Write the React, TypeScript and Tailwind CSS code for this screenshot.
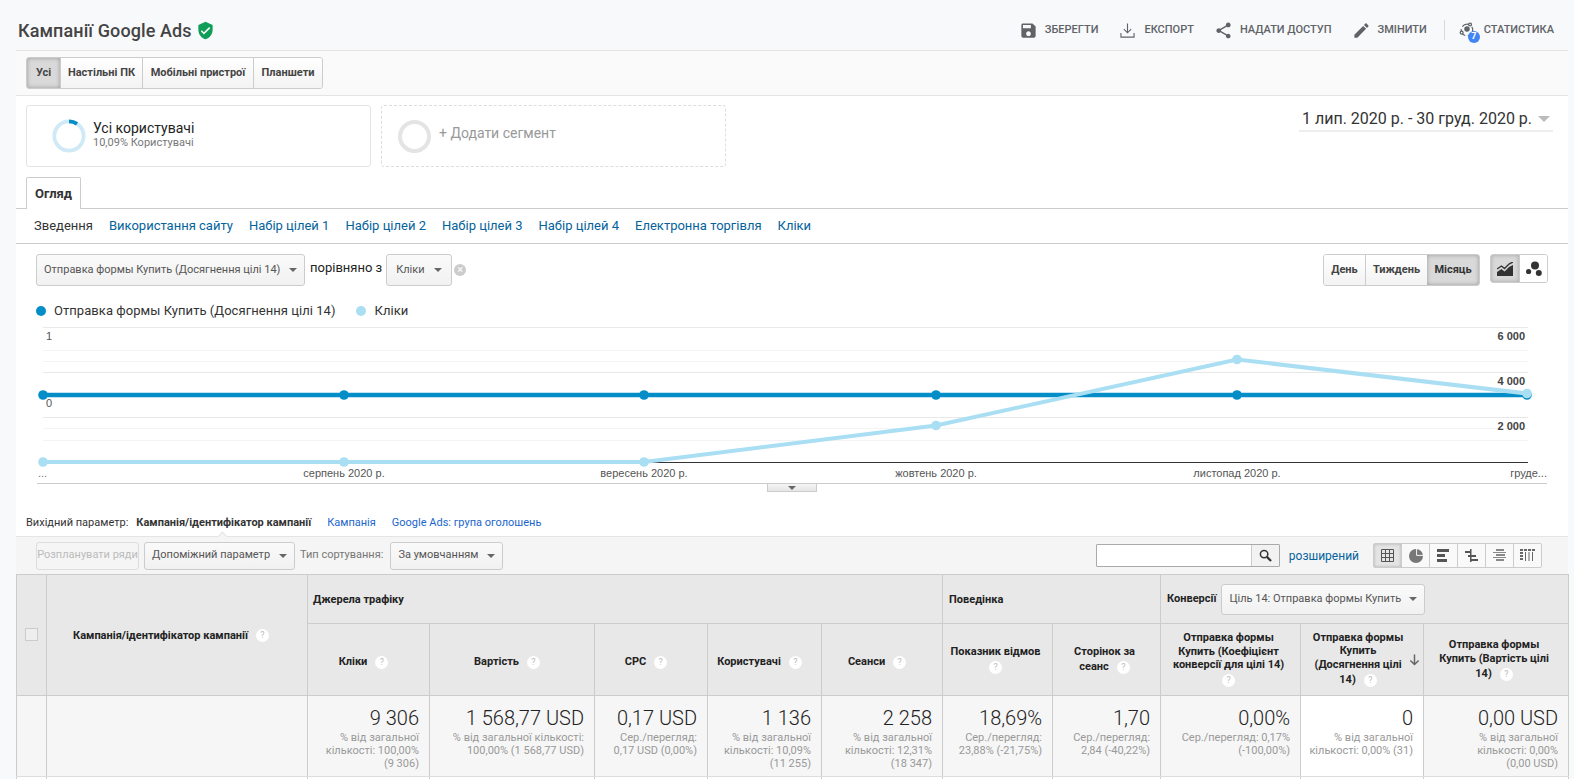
import { Fragment } from 'react';

const roboto = 'font-["Roboto","Noto_Sans",sans-serif]';

/* ------------------------------------------------------------------ */
/*  Data                                                               */
/* ------------------------------------------------------------------ */

const actions = [
  { label: 'ЗБЕРЕГТИ', icon: 'save' },
  { label: 'ЕКСПОРТ', icon: 'export' },
  { label: 'НАДАТИ ДОСТУП', icon: 'share' },
  { label: 'ЗМІНИТИ', icon: 'edit' },
];

const subTabs = ['Використання сайту', 'Набір цілей 1', 'Набір цілей 2', 'Набір цілей 3', 'Набір цілей 4', 'Електронна торгівля', 'Кліки'];

type Column = {
  title: string[];
  value: string;
  sub: string[];
  helpLine?: boolean;
  sorted?: boolean;
};

const columns: Column[] = [
  { title: ['Кліки'], value: '9 306', sub: ['% від загальної', 'кількості: 100,00%', '(9 306)'] },
  { title: ['Вартість'], value: '1 568,77 USD', sub: ['% від загальної кількості:', '100,00% (1 568,77 USD)'] },
  { title: ['CPC'], value: '0,17 USD', sub: ['Сер./перегляд:', '0,17 USD (0,00%)'] },
  { title: ['Користувачі'], value: '1 136', sub: ['% від загальної', 'кількості: 10,09%', '(11 255)'] },
  { title: ['Сеанси'], value: '2 258', sub: ['% від загальної', 'кількості: 12,31%', '(18 347)'] },
  { title: ['Показник відмов'], value: '18,69%', sub: ['Сер./перегляд:', '23,88% (-21,75%)'], helpLine: true },
  { title: ['Сторінок за', 'сеанс'], value: '1,70', sub: ['Сер./перегляд:', '2,84 (-40,22%)'] },
  { title: ['Отправка формы', 'Купить (Коефіцієнт', 'конверсії для цілі 14)'], value: '0,00%', sub: ['Сер./перегляд: 0,17%', '(-100,00%)'], helpLine: true },
  { title: ['Отправка формы', 'Купить', '(Досягнення цілі', '14)'], value: '0', sub: ['% від загальної', 'кількості: 0,00% (31)'], sorted: true },
  { title: ['Отправка формы', 'Купить (Вартість цілі', '14)'], value: '0,00 USD', sub: ['% від загальної', 'кількості: 0,00%', '(0,00 USD)'] },
];

const chartX = [43, 344, 644, 936, 1237, 1527];
const clicksY = [462, 462, 462, 425.5, 359.5, 393.5];

/* ------------------------------------------------------------------ */
/*  Small pieces                                                       */
/* ------------------------------------------------------------------ */

function ActionIcon({ name }: { name: string }) {
  const paths: Record<string, string> = {
    save: 'M17 3H5c-1.11 0-2 .9-2 2v14c0 1.1.89 2 2 2h14c1.1 0 2-.9 2-2V7l-4-4zm-5 16c-1.66 0-3-1.34-3-3s1.34-3 3-3 3 1.34 3 3-1.34 3-3 3zm3-10H5V5h10v4z',
    export: 'M11.3 3h1.4v10.2l3.4-3.4 1 1-5.1 5.1-5.1-5.1 1-1 3.4 3.4V3zM3 15h1.4v4.6h15.2V15H21v6H3v-6z',
    share: 'M18 16.08c-.76 0-1.44.3-1.96.77L8.91 12.7c.05-.23.09-.46.09-.7s-.04-.47-.09-.7l7.05-4.11c.54.5 1.25.81 2.04.81 1.66 0 3-1.34 3-3s-1.34-3-3-3-3 1.34-3 3c0 .24.04.47.09.7L8.04 9.81C7.5 9.31 6.79 9 6 9c-1.66 0-3 1.34-3 3s1.34 3 3 3c.79 0 1.5-.31 2.04-.81l7.12 4.16c-.05.21-.08.43-.08.65 0 1.61 1.31 2.92 2.92 2.92 1.61 0 2.92-1.31 2.92-2.92s-1.31-2.92-2.92-2.92z',
    edit: 'M3 17.25V21h3.75L17.81 9.94l-3.75-3.75L3 17.25zM20.71 7.04c.39-.39.39-1.02 0-1.41l-2.34-2.34c-.39-.39-1.02-.39-1.41 0l-1.83 1.83 3.75 3.75 1.83-1.83z',
  };
  return (
    <svg viewBox="0 0 24 24" className="w-[19px] h-[19px] fill-[#5f6368]">
      <path d={paths[name]} />
    </svg>
  );
}

function Caret({ className = 'border-x-[4px] border-t-[4px] border-t-[#666]' }: { className?: string }) {
  return <span className={`inline-block w-0 h-0 border-x-transparent ${className}`} />;
}

function Select({ label, className = '' }: { label: string; className?: string }) {
  return (
    <div className={`flex items-center justify-between rounded-[3px] border border-[#ccc] bg-gradient-to-b from-[#fafafa] to-[#f1f1f1] text-[#555] ${className}`}>
      <span>{label}</span>
      <Caret />
    </div>
  );
}

function Help() {
  return (
    <span className="inline-flex items-center justify-center w-[13px] h-[13px] rounded-full bg-white text-[9px] font-normal text-[#bbb] align-middle ml-[8px]">?</span>
  );
}

function ChartTypeIcons() {
  return (
    <div className="flex h-[29px] w-[58px] rounded-[3px] border border-[#ccc] overflow-hidden">
      <div className="w-[29px] flex items-center justify-center bg-[#d9d9d9] shadow-[inset_0_0_4px_rgba(0,0,0,0.25)] border-r border-[#ccc]">
        <svg viewBox="0 0 16 14" className="w-[16px] h-[14px]">
          <path d="M0 14v-4l4.5-3 3 2.5L12 5l4-2v11z" fill="#333" />
          <path d="M0 7l4.5-3 3 2.5L12 2l4-2" stroke="#333" strokeWidth="1.4" fill="none" />
        </svg>
      </div>
      <div className="flex-1 flex items-center justify-center bg-white">
        <svg viewBox="0 0 16 16" className="w-[16px] h-[16px] fill-[#333]">
          <circle cx="9" cy="4.5" r="4" />
          <circle cx="2.6" cy="10.5" r="2.6" />
          <circle cx="12.8" cy="12" r="3" />
        </svg>
      </div>
    </div>
  );
}

function TableViewIcon({ index }: { index: number }) {
  if (index === 0) {
    return (
      <svg viewBox="0 0 13 13" className="w-[13px] h-[13px]" fill="none" stroke="#555" strokeWidth="1">
        <path d="M.5.5h12v12H.5zM4.5.5v12M8.5.5v12M.5 4.5h12M.5 8.5h12" />
      </svg>
    );
  }
  if (index === 1) {
    return (
      <svg viewBox="0 0 14 14" className="w-[14px] h-[14px]">
        <circle cx="7" cy="7" r="7" fill="#777" />
        <path d="M7.6 0v6.4H14" stroke="#f5f5f5" strokeWidth="1" fill="none" />
      </svg>
    );
  }
  if (index === 2) {
    return (
      <svg viewBox="0 0 13 13" className="w-[13px] h-[13px] fill-[#555]">
        <rect x="0" y="0" width="12" height="3" />
        <rect x="0" y="5" width="8" height="3" />
        <rect x="0" y="10" width="10" height="3" />
      </svg>
    );
  }
  if (index === 3) {
    return (
      <svg viewBox="0 0 13 13" className="w-[13px] h-[13px] fill-[#555]">
        <rect x="0" y="2" width="6" height="2" />
        <rect x="5" y="0" width="1.5" height="13" />
        <rect x="3" y="6" width="8" height="2" />
        <rect x="5" y="10" width="8" height="2" />
      </svg>
    );
  }
  if (index === 4) {
    return (
      <svg viewBox="0 0 13 13" className="w-[13px] h-[13px] fill-[#888]">
        <rect x="3" y="0" width="8" height="2" />
        <rect x="0" y="3" width="13" height="1" />
        <rect x="3" y="5" width="9" height="2" />
        <rect x="0" y="8" width="13" height="1" />
        <rect x="3" y="10" width="8" height="2" />
      </svg>
    );
  }
  return (
    <svg viewBox="0 0 15 13" className="w-[15px] h-[13px] fill-[#666]">
      <path d="M0 0h3v2H0zM4 0h3v2H4zM8 0h3v2H8zM12 0h3v2h-3zM0 3h3v2H0zM0 6h3v2H0zM0 9h3v2H0z" />
      <rect x="5" y="3" width="1" height="9" />
      <rect x="8.5" y="3" width="1" height="9" />
      <rect x="12" y="3" width="1" height="9" />
    </svg>
  );
}

function Chart() {
  const major = [327.5, 372.5, 417.5];
  const minor = [350.5, 361.5, 428.5, 440.5];
  return (
    <svg viewBox="16 324 1552 172" className="block w-[1552px] h-[172px]">
      {major.map((y) => (
        <line key={y} x1="43" x2="1528" y1={y} y2={y} stroke="#e8e8e8" />
      ))}
      {minor.map((y) => (
        <line key={y} x1="43" x2="1528" y1={y} y2={y} stroke="#f4f4f4" />
      ))}
      <line x1="43" x2="1528" y1="462.5" y2="462.5" stroke="#333" />
      <line x1="37" x2="1547" y1="483.5" y2="483.5" stroke="#ccc" />

      <polyline points={chartX.map((x) => `${x},395`).join(' ')} fill="none" stroke="#058dc7" strokeWidth="4.5" />
      {chartX.map((x) => (
        <circle key={x} cx={x} cy="395" r="4.8" fill="#058dc7" />
      ))}
      <polyline points={chartX.map((x, i) => `${x},${clicksY[i]}`).join(' ')} fill="none" stroke="#aadff3" strokeWidth="4" />
      {chartX.map((x, i) => (
        <circle key={x} cx={x} cy={clicksY[i]} r="4.8" fill="#aadff3" />
      ))}

      <g fontFamily='"Liberation Sans", sans-serif' fontSize="11" fill="#555">
        <text x="46" y="340">1</text>
        <text x="46" y="407">0</text>
        <text x="38" y="477" fill="#777">...</text>
        <text x="344" y="477" textAnchor="middle">серпень 2020 р.</text>
        <text x="644" y="477" textAnchor="middle">вересень 2020 р.</text>
        <text x="936" y="477" textAnchor="middle">жовтень 2020 р.</text>
        <text x="1237" y="477" textAnchor="middle">листопад 2020 р.</text>
        <text x="1547" y="477" textAnchor="end">груде...</text>
        <g fontWeight="700" textAnchor="end" fill="#444">
          <text x="1525" y="340">6 000</text>
          <text x="1525" y="385">4 000</text>
          <text x="1525" y="430">2 000</text>
        </g>
      </g>
    </svg>
  );
}

/* ------------------------------------------------------------------ */
/*  Page                                                               */
/* ------------------------------------------------------------------ */

export default function App() {
  return (
    <div className={`h-[779px] w-[1574px] overflow-hidden bg-[#f8f9fa] ${roboto} text-[#333]`}>
      {/* HEADER */}
      <header className="h-[50px] pt-[10px] flex items-center justify-between pl-[18px] pr-[20px]">
        <div className="flex items-center gap-[4px]">
          <h1 className="text-[18px] font-medium text-[#444] tracking-[0.1px]">Кампанії Google Ads</h1>
          <svg viewBox="0 0 24 24" className="w-[19px] h-[19px] fill-[#0f9d58]">
            <path d="M12 1L3 5v6c0 5.55 3.84 10.74 9 12 5.16-1.26 9-6.45 9-12V5l-9-4zm-2 16l-4-4 1.41-1.41L10 14.17l6.59-6.59L18 9l-8 8z" />
          </svg>
        </div>
        <div className="flex items-center text-[11px] font-medium text-[#5f6368]">
          {actions.map((a) => (
            <div key={a.label} className="flex items-center gap-[7px] ml-[20px]">
              <ActionIcon name={a.icon} />
              <span>{a.label}</span>
            </div>
          ))}
          <div className="w-px h-[20px] bg-[#d8d8d8] ml-[17px] mr-[14px]" />
          <div className="relative flex items-center gap-[9px]">
            <svg viewBox="0 0 18 18" className="w-[16px] h-[16px]" fill="none" stroke="#5f6368" strokeWidth="1.4">
              <circle cx="9" cy="9" r="6.5" strokeDasharray="9 3" />
              <circle cx="9" cy="8" r="2.4" fill="#5f6368" />
              <circle cx="12.5" cy="2.8" r="1.6" fill="#f8f9fa" />
              <circle cx="3" cy="12" r="1.6" fill="#f8f9fa" />
            </svg>
            <span className="absolute left-[9px] top-[9px] w-[12px] h-[12px] rounded-full bg-[#4285f4] text-white text-[9px] font-bold flex items-center justify-center">7</span>
            <span>СТАТИСТИКА</span>
          </div>
        </div>
      </header>

      <main className="ml-[16px] w-[1552px] bg-white border-t border-[#e4e4e4]">
        {/* DEVICE FILTER */}
        <div className="h-[45px] bg-[#fafafa] border-b border-[#e4e4e4] pl-[10px] pt-[6px]">
          <div className="inline-flex h-[32px] rounded-[3px] border border-[#ccc] text-[11px] font-bold text-[#444] overflow-hidden bg-white">
            <div className="w-[33px] flex items-center justify-center bg-[#d9d9d9] shadow-[inset_0_0_4px_rgba(0,0,0,0.3)]">Усі</div>
            <div className="w-[82px] flex items-center justify-center border-l border-[#ccc] bg-gradient-to-b from-[#fff] to-[#f3f3f3]">Настільні ПК</div>
            <div className="w-[111px] flex items-center justify-center border-l border-[#ccc] bg-gradient-to-b from-[#fff] to-[#f3f3f3]">Мобільні пристрої</div>
            <div className="w-[69px] flex items-center justify-center border-l border-[#ccc] bg-gradient-to-b from-[#fff] to-[#f3f3f3]">Планшети</div>
          </div>
        </div>

        {/* SEGMENTS */}
        <div className="h-[81px] pl-[10px] pr-[15px] pt-[9px] flex justify-between">
          <div className="flex gap-[10px]">
            <div className="w-[345px] h-[62px] rounded-[3px] border border-[#e4e4e4] flex items-center pl-[25px]">
              <svg viewBox="0 0 36 36" className="w-[34px] h-[34px]">
                <circle cx="18" cy="18" r="15.5" fill="none" stroke="#cfe9f6" strokeWidth="4" />
                <path d="M18 2.5a15.5 15.5 0 0 1 8.5 2.6" fill="none" stroke="#058dc7" strokeWidth="4" />
              </svg>
              <div className="ml-[7px] mb-[4px]">
                <div className="text-[14px] leading-[16px] text-[#222]">Усі користувачі</div>
                <div className="text-[11px] leading-[13px] text-[#777]">10,09% Користувачі</div>
              </div>
            </div>
            <div className="w-[345px] h-[62px] rounded-[3px] border border-dashed border-[#ddd] flex items-center pl-[16px]">
              <div className="w-[33px] h-[33px] rounded-full border-[4px] border-[#e4e4e4]" />
              <span className="ml-[8px] mb-[6px] text-[14px] text-[#999]">+ Додати сегмент</span>
            </div>
          </div>
          <div className="w-[254px] h-[25px] mt-[2px] border-b-2 border-[#eee] flex items-center justify-between pl-[3px] pr-[3px] text-[#333]">
            <span className="text-[16px]">1 лип. 2020 р. - 30 груд. 2020 р.</span>
            <Caret className="border-x-[6px] border-t-[6px] border-t-[#bbb]" />
          </div>
        </div>

        {/* TABS */}
        <div className="h-[32px] border-b border-[#ccc] pl-[10px]">
          <div className="w-[55px] h-[32px] rounded-t-[2px] border border-b-0 border-[#ccc] bg-white flex items-center justify-center text-[13px] font-bold text-[#333]">Огляд</div>
        </div>
        <div className="h-[35px] border-b border-[#ccc] flex items-center pl-[18px] gap-[16px] text-[13px] text-[#05639c]">
          <span className="text-[#333]">Зведення</span>
          {subTabs.map((t) => (
            <span key={t}>{t}</span>
          ))}
        </div>

        {/* CHART CONTROLS */}
        <div className="h-[53px] pt-[10px] px-[20px] flex items-start justify-between">
          <div className="flex items-center">
            <Select label="Отправка формы Купить (Досягнення цілі 14)" className="w-[269px] h-[32px] px-[7px] text-[11px]" />
            <span className="ml-[5px] mr-[4px] text-[13px] text-[#222] -mt-[5px]">порівняно з</span>
            <Select label="Кліки" className="w-[66px] h-[32px] px-[9px] text-[11px]" />
            <span className="ml-[2px] w-[12px] h-[12px] rounded-full bg-[#ccc] text-white text-[11px] leading-[11px] text-center">×</span>
          </div>
          <div className="flex items-start">
            <div className="flex h-[32px] rounded-[3px] border border-[#ccc] overflow-hidden text-[11px] font-bold text-[#444]">
              <div className="w-[41px] flex items-center justify-center bg-gradient-to-b from-[#fff] to-[#f3f3f3]">День</div>
              <div className="w-[62px] flex items-center justify-center border-l border-[#ccc] bg-gradient-to-b from-[#fff] to-[#f3f3f3]">Тиждень</div>
              <div className="w-[52px] flex items-center justify-center text-[#333] bg-[#d9d9d9] shadow-[inset_0_0_4px_rgba(0,0,0,0.3)]">Місяць</div>
            </div>
            <div className="ml-[10px]">
              <ChartTypeIcons />
            </div>
          </div>
        </div>

        {/* LEGEND */}
        <div className="h-[27px] pl-[20px] flex items-center text-[13px] text-[#333] tracking-[0.05px]">
          <span className="w-[10px] h-[10px] rounded-full bg-[#058dc7]" />
          <span className="ml-[8px]">Отправка формы Купить (Досягнення цілі 14)</span>
          <span className="ml-[20px] w-[10px] h-[10px] rounded-full bg-[#aadff3]" />
          <span className="ml-[9px]">Кліки</span>
        </div>

        {/* CHART */}
        <div className="relative h-[172px]">
          <Chart />
          <div className="absolute left-[751px] top-[160px] w-[50px] h-[8px] bg-gradient-to-b from-[#f5f5f5] to-[#e5e5e5] border border-t-0 border-[#ccc] flex items-center justify-center rounded-b-[1px]">
            <Caret />
          </div>
        </div>

        {/* PRIMARY DIMENSION */}
        <div className="relative h-[41px] border-b border-[#e4e4e4] pl-[10px] pt-[12px] flex items-center text-[11px] leading-[13px]">
          <span className="text-[#333]">Вихідний параметр:</span>
          <span className="ml-[8px] font-bold text-[#333]">Кампанія/ідентифікатор кампанії</span>
          <span className="ml-[16px] text-[#1a66cc]">Кампанія</span>
          <span className="ml-[16px] text-[#1a66cc]">Google Ads: група оголошень</span>
          <span className="absolute left-[203px] bottom-[-4px] w-[7px] h-[7px] rotate-45 bg-[#f5f5f5] border-l border-t border-[#e4e4e4]" />
        </div>

        {/* TABLE TOOLBAR */}
        <div className="h-[37px] bg-[#f5f5f5] pl-[20px] pr-[26px] flex items-center justify-between">
          <div className="flex items-center text-[11px]">
            <div className="w-[103px] h-[28px] rounded-[3px] border border-[#ddd] flex items-center justify-center text-[#bbb]">Розпланувати ряди</div>
            <Select label="Допоміжний параметр" className="ml-[5px] w-[151px] h-[28px] px-[7px]" />
            <span className="ml-[5px] text-[#777]">Тип сортування:</span>
            <Select label="За умовчанням" className="ml-[7px] w-[113px] h-[28px] px-[7px]" />
          </div>
          <div className="flex items-center">
            <div className="flex h-[23px] w-[184px] border border-[#aaa] bg-white rounded-[1px]">
              <div className="flex-1" />
              <div className="w-[28px] border-l border-[#ccc] bg-[#f2f2f2] flex items-center justify-center">
                <svg viewBox="0 0 14 14" className="w-[13px] h-[13px]" fill="none" stroke="#333">
                  <circle cx="5.5" cy="5.5" r="4" strokeWidth="1.6" />
                  <path d="M8.5 8.5l4.5 4.5" strokeWidth="2.4" />
                </svg>
              </div>
            </div>
            <span className="ml-[9px] text-[12px] text-[#05639c]">розширений</span>
            <div className="ml-[14px] flex h-[25px] w-[169px] rounded-[2px] border border-[#ccc] overflow-hidden">
              {[0, 1, 2, 3, 4, 5].map((i) => (
                <div
                  key={i}
                  className={
                    i === 0
                      ? 'flex-1 flex items-center justify-center bg-[#e4e4e4] shadow-[inset_0_0_3px_rgba(0,0,0,0.25)]'
                      : 'flex-1 flex items-center justify-center border-l border-[#ccc] bg-[#f9f9f9]'
                  }
                >
                  <TableViewIcon index={i} />
                </div>
              ))}
            </div>
          </div>
        </div>

        {/* TABLE */}
        <table className="w-[1552px] table-fixed border-collapse text-[11px] text-[#222]">
          <colgroup>
            <col className="w-[30px]" />
            <col className="w-[261px]" />
            <col className="w-[122px]" />
            <col className="w-[165px]" />
            <col className="w-[113px]" />
            <col className="w-[114px]" />
            <col className="w-[121px]" />
            <col className="w-[110px]" />
            <col className="w-[108px]" />
            <col className="w-[140px]" />
            <col className="w-[123px]" />
            <col className="w-[145px]" />
          </colgroup>
          <thead>
            <tr className="h-[49px] bg-[#e8e8e8] font-bold">
              <th rowSpan={2} className="border border-[#ccc] text-center align-middle">
                <span className="inline-block w-[13px] h-[13px] border border-[#ccc] bg-[#eee] align-middle" />
              </th>
              <th rowSpan={2} className="border border-[#ccc] pr-[12px] pt-[2px] text-center align-middle font-bold">
                Кампанія/ідентифікатор кампанії
                <Help />
              </th>
              <th colSpan={5} className="border border-[#ccc] text-left pl-[5px] pt-[2px] font-bold">Джерела трафіку</th>
              <th colSpan={2} className="border border-[#ccc] text-left pl-[6px] pt-[2px] font-bold">Поведінка</th>
              <th colSpan={3} className="border border-[#ccc] text-left pl-[6px] font-bold">
                <div className="flex items-center">
                  <span>Конверсії</span>
                  <Select label="Ціль 14: Отправка формы Купить" className="ml-[5px] w-[204px] h-[31px] px-[7px] font-normal" />
                </div>
              </th>
            </tr>
            <tr className="h-[72px] bg-[#e8e8e8]">
              {columns.map((c) => (
                <th
                  key={c.value}
                  className={`relative border border-[#ccc] text-center align-middle font-bold whitespace-nowrap ${
                    c.sorted ? 'pr-[8px]' : c.title.length === 1 && !c.helpLine ? 'pr-[10px] pt-[4px]' : 'pr-[4px] pt-[1px]'
                  }`}
                >
                  {c.title.map((line, i) => {
                    const withHelp = !c.helpLine && i === c.title.length - 1;
                    return (
                      <div key={line} className={withHelp ? 'leading-[17px]' : 'leading-[13.5px]'}>
                        {line}
                        {withHelp && <Help />}
                      </div>
                    );
                  })}
                  {c.helpLine && (
                    <div className="leading-[17px] -ml-[8px]">
                      <Help />
                    </div>
                  )}
                  {c.sorted && (
                    <svg viewBox="0 0 12 12" className="absolute right-[3px] top-[30px] w-[11px] h-[12px]" fill="none" stroke="#666" strokeWidth="1.6">
                      <path d="M6 0v11M1.5 6.5L6 11l4.5-4.5" />
                    </svg>
                  )}
                </th>
              ))}
            </tr>
          </thead>
          <tbody>
            <tr className="h-[81px] bg-[#f6f6f6]">
              <td className="border border-[#ddd] border-x-[#ccc]" />
              <td className="border border-[#ddd] border-x-[#ccc]" />
              {columns.map((c) => (
                <td
                  key={c.value}
                  className={`border border-[#ddd] border-x-[#ccc] pr-[10px] pl-[2px] text-right align-top pt-[10px] ${c.sorted ? 'bg-white' : ''}`}
                >
                  <div className="text-[20px] leading-[24px] font-light text-[#222]">{c.value}</div>
                  <div className="text-[11px] leading-[13px] text-[#999] mt-[1px]">
                    {c.sub.map((line) => (
                      <Fragment key={line}>
                        <span className="whitespace-nowrap">{line}</span>
                        <br />
                      </Fragment>
                    ))}
                  </div>
                </td>
              ))}
            </tr>
            <tr className="h-[20px] bg-white">
              <td className="border-x border-[#ccc]" />
              <td className="border-x border-[#ccc]" />
              {columns.map((c) => (
                <td key={c.value} className="border-x border-[#ccc]" />
              ))}
            </tr>
          </tbody>
        </table>
      </main>
    </div>
  );
}
